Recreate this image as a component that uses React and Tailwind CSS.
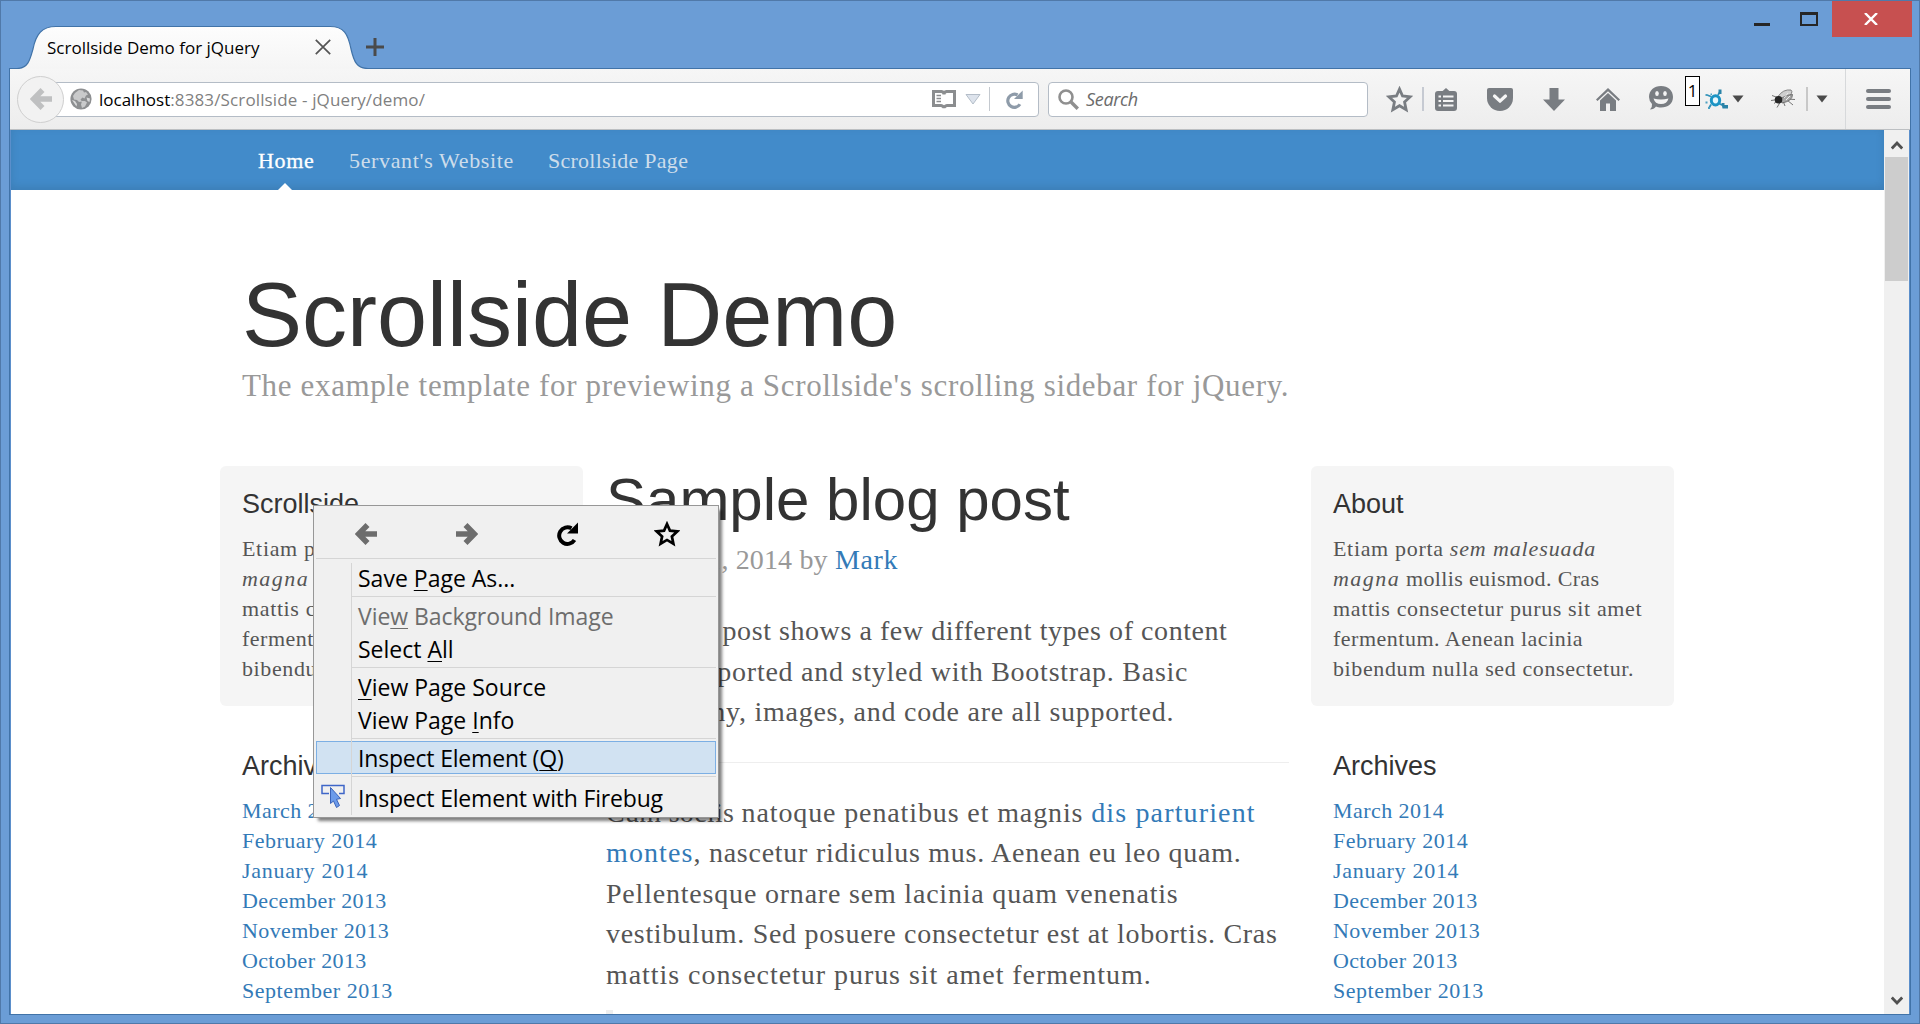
const months = [
  ['March 2014', 'tracking-[0.43px]'],
  ['February 2014', 'tracking-[0.49px]'],
  ['January 2014', 'tracking-[0.7px]'],
  ['December 2013', 'tracking-[0.37px]'],
  ['November 2013', 'tracking-[0.37px]'],
  ['October 2013', 'tracking-[0.36px]'],
  ['September 2013', 'tracking-[0.51px]'],
  ['August 2013', 'tracking-[0.45px]'],
];

function Star({ className, width }) {
  return (
    <svg viewBox="0 0 24 24" className={className} fill="none" stroke="currentColor" strokeWidth={width} strokeLinejoin="miter">
      <path d="M12 2.8l2.7 6.1 6.8.7-5 4.6 1.4 6.8-5.9-3.5-5.9 3.5 1.4-6.8-5-4.6 6.8-.7z" />
    </svg>
  );
}

function Reload({ className }) {
  return (
    <svg viewBox="0 0 22 24" className={className}>
      <path d="M18.500 18A8.300 8.300 0 1 1 15.500 6.300" fill="none" stroke="currentColor" strokeWidth="4" />
      <path d="M22 .5V11.500H11z" fill="currentColor" />
    </svg>
  );
}

function Arrow({ className }) {
  return (
    <svg viewBox="0 0 22 24" className={className}>
      <path d="M12.5 3L3.6 12l8.9 9M4.5 12H22" fill="none" stroke="currentColor" strokeWidth="5.6" strokeLinejoin="miter" />
    </svg>
  );
}

function Caret({ className }) {
  return (
    <svg viewBox="0 0 12 8" className={className} fill="#4a4a4a">
      <path d="M.5.5h11L6 7.5z" />
    </svg>
  );
}

function TitleBar() {
  return (
    <div className="flex h-[67px] shrink-0 items-start">
      <div className="mt-[23px] ml-[9px] flex h-[45px] shrink-0">
        <div className="relative h-[45px] w-[364px]">
          <svg viewBox="0 0 364 45" className="absolute top-0 left-0 h-[45px] w-[364px]">
            <defs>
              <linearGradient id="tab" x1="0" y1="0" x2="0" y2="1">
                <stop offset="0" stopColor="#fdfdfd" />
                <stop offset="1" stopColor="#f5f5f5" />
              </linearGradient>
            </defs>
            <path d="M0 45V44.5H7C18 44.5 20 36 23 25C26 10 32 2.5 46 2.5H320C334 2.5 338 10 341 25C344 38 347 44.5 358 44.5H364V45Z" fill="url(#tab)" />
            <path d="M0 44.5H7C18 44.5 20 36 23 25C26 10 32 2.5 46 2.5H320C334 2.5 338 10 341 25C344 38 347 44.5 358 44.5H364" fill="none" stroke="#4173a8" strokeWidth="1.2" />
          </svg>
          <div className="relative flex h-[45px] items-center pl-[37px]">
            <span className="w-[268px] pt-0.5 text-[17px] whitespace-nowrap text-black">Scrollside Demo for jQuery</span>
            <svg viewBox="0 0 16 16" className="h-4 w-4" stroke="#555" strokeWidth="1.7" fill="none">
              <path d="M.8.8l14.4 14.4M15.2.8L.8 15.2" />
            </svg>
          </div>
        </div>
        <svg viewBox="0 0 18 18" className="-ml-2 mt-[14px] h-[18px] w-[18px]" stroke="#4a4a4a" strokeWidth="3">
          <path d="M9 0v18M0 9h18" />
        </svg>
      </div>
      <div className="ml-auto flex items-start">
        <div className="mt-[22px] h-[3px] w-4 bg-[#262626]" />
        <div className="mt-[11px] ml-[30px] h-[14px] w-[18px] border-2 border-t-[3px] border-[#262626]" />
        <div className="mr-[7px] ml-[14px] flex h-9 w-20 items-center justify-center bg-[#c75050] pr-0.5">
          <svg viewBox="0 0 14 12" className="h-3 w-3.5" stroke="#fff" strokeWidth="2.4">
            <path d="M1 0l12 12M13 0L1 12" />
          </svg>
        </div>
      </div>
    </div>
  );
}

function Toolbar() {
  return (
    <div className="flex h-[61px] shrink-0 items-center border-b border-[#bcbfc2] bg-linear-to-b from-[#f6f6f6] to-[#ededed]">
      <div className="relative z-10 ml-[7px] flex h-[47px] w-[47px] shrink-0 items-center justify-center rounded-full border border-[#cfcfcf] bg-[#f2f2f2]">
        <Arrow className="h-6 w-[22px] text-[#bfc0c1]" />
      </div>
      <div className="-ml-[18px] flex h-[35px] w-[993px] shrink-0 items-center rounded-r-sm border border-[#b4bcc6] bg-white">
        <svg viewBox="0 0 22 22" className="ml-[23px] h-[22px] w-[22px] shrink-0">
          <circle cx="11" cy="11" r="10.6" fill="#8d8f91" />
          <path d="M5 5l4-3 4 .5 1 2 2-.5 2 2.500-2 1-1.500 3-2-1-2 2 1.500 2-3 .5-2-2-3-.5-1-3.500zM12 13l3 0 2 1.500-2 4-3 1.500-1-3.500z" fill="#c9cacb" />
          <path d="M2 12l3 1 2 3-.5 2.500zM16.500 9.500l3.500 1-.5 3.500-2-1z" fill="#d8d9da" />
        </svg>
        <div className="ml-[7px] flex pt-0.5 text-[17px] whitespace-nowrap">
          <span className="text-black">localhost</span>
          <span className="tracking-[0.13px] text-[#7f7f7f]">:8383/Scrollside - jQuery/demo/</span>
        </div>
        <svg viewBox="0 0 24 19" className="mr-[9px] ml-auto h-[19px] w-6" fill="none" stroke="#8b8d8f">
          <path d="M1.500 1.500H9.500Q12 1.800 12 4.500Q12 1.800 14.500 1.500H22.500V15.500H15Q12.500 15.800 12 18Q11.500 15.800 9 15.500H1.500Z" strokeWidth="3" />
          <path d="M4.500 5.500H9M4.500 8.500H9M4.500 11.500H9" strokeWidth="1.300" />
        </svg>
        <svg viewBox="0 0 16 11" className="h-[11px] w-4" fill="#dde3ec" stroke="#b4bdc8">
          <path d="M1 .5h14L8 10z" />
        </svg>
        <div className="ml-2 h-6 w-px bg-[#c4c9cf]" />
        <Reload className="mr-[15px] ml-[15px] h-[19px] w-[18px] text-[#8e9ba9]" />
      </div>
      <div className="ml-[9px] flex h-[35px] w-80 shrink-0 items-center rounded-sm border border-[#b4bcc6] bg-white">
        <svg viewBox="0 0 21 21" className="ml-[9px] h-[21px] w-[21px]" fill="none" stroke="#8f8f8f">
          <circle cx="8" cy="8" r="6.500" strokeWidth="2.600" />
          <path d="M12.800 12.800l7 7" strokeWidth="3.400" />
        </svg>
        <span className="ml-[7px] pt-px text-[18px] tracking-[-0.33px] text-[#6b6b6b] italic">Search</span>
      </div>

      <div className="flex h-[60px] flex-1 items-center text-[#797d82]">
        <Star className="ml-[18px] h-[27px] w-[27px]" width="2.5" />
        <div className="ml-[9px] h-6 w-0.5 bg-[#c6cad2]" />
        <svg viewBox="0 0 22 23" className="ml-[11px] h-[23px] w-[22px]">
          <rect x="0" y="3" width="22" height="20" rx="3" fill="currentColor" />
          <path d="M6.500 4L11 0l4.500 4z" fill="currentColor" />
          <path d="M3.500 8.500h2.500M8 8.500h10.500M3.500 13h2.500M8 13h10.500M3.500 17.500h2.500M8 17.500h10.500" stroke="#f4f4f4" strokeWidth="2.200" />
        </svg>
        <svg viewBox="0 0 26 23" className="ml-[30px] h-[23px] w-[26px]">
          <path d="M2 0H24Q26 0 26 2V10A13 13 0 0 1 0 10V2Q0 0 2 0Z" fill="currentColor" />
          <path d="M7.500 8l5.500 5.200L18.500 8" fill="none" stroke="#f6f6f6" strokeWidth="3.200" strokeLinecap="round" strokeLinejoin="round" />
        </svg>
        <svg viewBox="0 0 22 23" className="ml-[30px] h-[23px] w-[22px]" fill="currentColor">
          <path d="M6.500 0h9v11.500H22L11 23 0 11.500h6.500z" />
        </svg>
        <svg viewBox="0 0 24 23" className="ml-[31px] h-[23px] w-6" fill="currentColor">
          <path d="M12 0L24 11.500 22.500 13 12 3.200 1.500 13 0 11.500z" />
          <path d="M12 5l8 7.600V23h-6v-7.500h-4V23H4V12.600z" />
        </svg>
        <svg viewBox="0 0 24 24" className="mb-0.5 ml-[29px] h-6 w-6">
          <path d="M12 0C19 0 24 4.500 24 11S19 21.500 12 21.500C10 21.500 8.500 21.200 7 20.500Q5 23.500 1 23.500Q3.500 21 3 18Q0 15 0 11C0 4.500 5 0 12 0Z" fill="currentColor" />
          <ellipse cx="8" cy="7.500" rx="1.800" ry="2.600" fill="#f4f4f4" />
          <ellipse cx="16" cy="7.500" rx="1.800" ry="2.600" fill="#f4f4f4" />
          <path d="M4.500 12.500Q12 14.500 19.500 12.500Q18 18 12 18T4.500 12.500Z" fill="#f4f4f4" />
        </svg>
        <div className="mb-[17px] ml-3 flex h-[30px] w-[15px] items-center justify-center border border-black bg-white text-[17px] text-black">1</div>
        <svg viewBox="0 0 24 20" className="ml-[5px] h-[21px] w-6 shrink-0" fill="none">
          <path d="M13 5.500L15.500 1.500M14 14l5 2.500M6 7L2 5.500M6 15L4 18.500" stroke="#2f8fb8" strokeWidth="1.800" />
          <ellipse cx="10.500" cy="10.800" rx="4.200" ry="4.600" stroke="#1c94c4" strokeWidth="3" fill="#e9f8fd" />
          <path d="M13.500 0h3v4.500h-3zM16.500 13.500h3v2h3.500v3.500h-5.500z" fill="#2a83a8" />
          <path d="M.5 4.500h2v2h-2zM.5 12h2v2h-2zM5.500 4h1.500v1.500H5.500zM3 17.500h2v2H3z" fill="#4aa0c2" />
        </svg>
        <Caret className="ml-[3px] h-2 w-3" />
        <svg viewBox="0 0 25 20" className="ml-[27px] h-5 w-[25px] shrink-0">
          <path d="M1 6.500l7 2.500M0 11.500l7-1M6 18.500l3-5M14 17l-2-5M22 16l-6-5M16 10l8 .5M3 14.500l4-3" stroke="#666" strokeWidth=".9" />
          <path d="M7 7.500Q12 0 20 1Q23.500 4 14 10Z" fill="#cfcfcf" stroke="#777" strokeWidth=".9" />
          <path d="M9 10.500Q15 5 21.500 5.500Q21.500 12 11 14Z" fill="#a8a8a8" stroke="#666" strokeWidth=".9" />
          <path d="M13 9l4-5M15 11l4-4" stroke="#eee" strokeWidth="1" />
          <ellipse cx="7.500" cy="10.800" rx="3.800" ry="3.800" fill="#262626" />
        </svg>
        <div className="ml-[10px] h-6 w-0.5 bg-[#c8c8c8]" />
        <Caret className="ml-2 h-2 w-3" />
        <div className="ml-[17px] h-[60px] w-px bg-[#d7d9db]" />
        <div className="ml-5 flex w-[25px] flex-col gap-1">
          <div className="h-1 rounded-full bg-[#797d82]" />
          <div className="h-1 rounded-full bg-[#797d82]" />
          <div className="h-1 rounded-full bg-[#797d82]" />
        </div>
      </div>
    </div>
  );
}

function SiteNav() {
  return (
    <nav className="flex h-[60px] shrink-0 bg-[#428bca] pt-px pl-[247px] text-[22px] leading-[59px] whitespace-nowrap text-[#cdddeb] shadow-[inset_0_-3px_8px_rgba(0,0,0,0.1)]">
      <a className="relative w-[91px] tracking-[0.63px] text-white [-webkit-text-stroke:0.3px_white]">
        Home
        <span className="absolute bottom-0 left-5 border-x-[7px] border-b-[7px] border-x-transparent border-b-white" />
      </a>
      <a className="w-[199px] tracking-[0.65px]">5ervant's Website</a>
      <a className="tracking-[0.26px]">Scrollside Page</a>
    </nav>
  );
}

function Sidebar({ title }) {
  return (
    <aside className="w-[364px] shrink-0 text-[22px] leading-[30px] whitespace-nowrap">
      <section className="h-60 w-[363px] rounded-md bg-[#f5f5f5] pt-[23px] pl-[22px]">
        <h4 className="font-['Liberation_Sans'] text-[27px] leading-[30px] text-[#333]">{title}</h4>
        <div className="mt-[15px]">
          <p>
            <span className="tracking-[0.67px]">Etiam porta </span>
            <em className="tracking-[0.87px]">sem malesuada</em>
          </p>
          <p>
            <em className="tracking-[1.45px]">magna</em>
            <span className="tracking-[0.35px]"> mollis euismod. Cras</span>
          </p>
          <p className="tracking-[0.63px]">mattis consectetur purus sit amet</p>
          <p className="tracking-[0.5px]">fermentum. Aenean lacinia</p>
          <p className="tracking-[0.61px]">bibendum nulla sed consectetur.</p>
        </div>
      </section>
      <section className="pt-[45px] pl-[22px]">
        <h4 className="font-['Liberation_Sans'] text-[27px] leading-[30px] text-[#333]">Archives</h4>
        <ol className="mt-[15px] text-[#337ab7]">
          {months.map(([m, t]) => (
            <li key={m} className={t}>{m}</li>
          ))}
        </ol>
      </section>
    </aside>
  );
}

function Post() {
  return (
    <article className="ml-[22px] w-[683px] shrink-0 text-[28px] leading-[40.5px] whitespace-nowrap">
      <h2 className="mt-px font-['Liberation_Sans'] text-[60px] leading-[66px] text-[#333]">Sample blog post</h2>
      <p className="mt-[7px] leading-10 text-[#999]">
        <span className="tracking-[0.81px]">January 1</span>
        <span className="tracking-[0.15px]">, 2014 by </span>
        <a className="tracking-[0.67px] text-[#337ab7]">Mark</a>
      </p>
      <div className="mt-[31px]">
        <p className="tracking-[0.56px]"><span className="tracking-[0.3px]">This blog </span>post shows a few different types of content</p>
        <p className="tracking-[0.75px]">that's supported and styled with Bootstrap. Basic</p>
        <p className="tracking-[0.73px]">typography, images, and code are all supported.</p>
      </div>
      <hr className="mt-[29px] border-[#eee]" />
      <div className="mt-[30px]">
        <p>
          <span className="tracking-[0.3px]">Cum sociis </span>
          <span className="tracking-[0.88px]">natoque penatibus et magnis </span>
          <a className="tracking-[1.14px] text-[#337ab7]">dis parturient</a>
        </p>
        <p>
          <a className="tracking-[1.1px] text-[#337ab7]">montes</a>
          <span className="tracking-[0.74px]">, nascetur ridiculus mus. Aenean eu leo quam.</span>
        </p>
        <p className="tracking-[0.8px]">Pellentesque ornare sem lacinia quam venenatis</p>
        <p className="tracking-[0.69px]">vestibulum. Sed posuere consectetur est at lobortis. Cras</p>
        <p className="tracking-[0.95px]">mattis consectetur purus sit amet fermentum.</p>
      </div>
      <blockquote className="mt-[15px] h-20 border-l-[7px] border-[#eee]" />
    </article>
  );
}

function Scrollbar() {
  return (
    <div className="flex w-[25px] shrink-0 flex-col items-center bg-[#f0f0f0]">
      <svg viewBox="0 0 12 10" className="mt-[10px] h-[10px] w-3" fill="none" stroke="#505050" strokeWidth="2.800">
        <path d="M.8 8.500L6 3l5.200 5.500" />
      </svg>
      <div className="mt-[7px] h-[124px] w-[23px] bg-[#cdcdcd]" />
      <svg viewBox="0 0 12 10" className="mt-auto mb-2 h-[10px] w-3" fill="none" stroke="#505050" strokeWidth="2.800">
        <path d="M.8 1.500L6 7l5.200-5.500" />
      </svg>
    </div>
  );
}

function Key({ children }) {
  return <span className="underline decoration-1 underline-offset-[3px] [text-decoration-skip-ink:none]">{children}</span>;
}

function Separator() {
  return <div className="my-0.5 ml-9 h-px shrink-0 bg-[#d5d5d5]" />;
}

function ContextMenu() {
  return (
    <div className="absolute top-[504px] left-[312px] flex h-[313px] w-[406px] flex-col border border-[#979797] bg-[#f0f0f0] px-0.5 pt-px text-[23px] leading-[33px] whitespace-nowrap text-black shadow-[4px_4px_3px_-1px_rgba(0,0,0,0.5)]">
      <div className="flex h-[51px] shrink-0 items-center pt-0.5">
        <Arrow className="ml-[39px] h-6 w-[22px] text-[#6d6d6d]" />
        <Arrow className="ml-[79px] h-6 w-[22px] rotate-180 text-[#6d6d6d]" />
        <Reload className="ml-[78px] h-6 w-[22px]" />
        <Star className="ml-[76px] h-[26px] w-[26px]" width="2.5" />
      </div>
      <div className="h-px shrink-0 bg-[#d5d5d5]" />
      <div className="relative flex flex-1 flex-col pt-0.5">
        <div className="absolute top-1 bottom-0.5 left-[35px] z-10 w-px bg-[#d5d5d5]" />
        <div className="h-[33px] pt-px pl-[42px]">Save <Key>P</Key>age As...</div>
        <Separator />
        <div className="h-[33px] pt-px pl-[42px] tracking-[-0.06px] text-[#6d6d6d]">Vie<Key>w</Key> Background Image</div>
        <div className="h-[33px] pt-px pl-[42px]">Select <Key>A</Key>ll</div>
        <Separator />
        <div className="h-[33px] pt-px pl-[42px]"><Key>V</Key>iew Page Source</div>
        <div className="h-[33px] pt-px pl-[42px]">View Page <Key>I</Key>nfo</div>
        <Separator />
        <div className="h-[33px] border border-[#7cafe4] bg-[#d1e2f2] pt-px pl-[41px] leading-[31px] tracking-[-0.19px]">Inspect Element (<Key>Q</Key>)</div>
        <Separator />
        <div className="flex h-9 items-center pt-0.5 tracking-[-0.19px]">
          <svg viewBox="0 0 24 24" className="mr-[13px] mb-1 ml-[5px] h-6 w-6">
            <path d="M8 9.500H1V1.500H23V9.500H18" fill="none" stroke="#3f66c8" strokeWidth="1.500" />
            <path d="M9.500 3.500L19.500 14.500 15.500 15.300 18.500 21.500 15.500 23.500 12.500 17 9.500 19.500Z" fill="#6c9bea" stroke="#3a62b8" strokeWidth="1" />
          </svg>
          Inspect Element with Firebug
        </div>
      </div>
    </div>
  );
}

export default function App() {
  return (
    <div className="relative flex h-[1024px] w-[1920px] flex-col overflow-hidden border border-[#5079a9] bg-[#6b9dd6] font-['Open_Sans',sans-serif]">
      <TitleBar />
      <div className="mr-2 ml-2 flex h-[947px] flex-col border border-[#4173a8]">
        <Toolbar />
        <div className="flex h-[884px] shrink-0 bg-[#5b8fcb] pl-px">
          <div className="flex w-[1873px] shrink-0 flex-col overflow-hidden bg-white font-['Liberation_Serif',serif] text-[#555]">
            <SiteNav />
            <header className="h-[276px] shrink-0 pt-[76px] pl-[231px] whitespace-nowrap">
              <h1 className="-mb-0.5 font-['Liberation_Sans'] text-[90px] leading-[99px] text-[#333]">Scrollside Demo</h1>
              <p className="text-[31px] leading-[45px] tracking-[0.66px] text-[#999]">The example template for previewing a Scrollside's scrolling sidebar for jQuery.</p>
            </header>
            <main className="flex pl-[209px]">
              <Sidebar title="Scrollside" />
              <Post />
              <div className="ml-[22px]">
                <Sidebar title="About" />
              </div>
            </main>
          </div>
          <Scrollbar />
        </div>
      </div>
      <ContextMenu />
    </div>
  );
}
